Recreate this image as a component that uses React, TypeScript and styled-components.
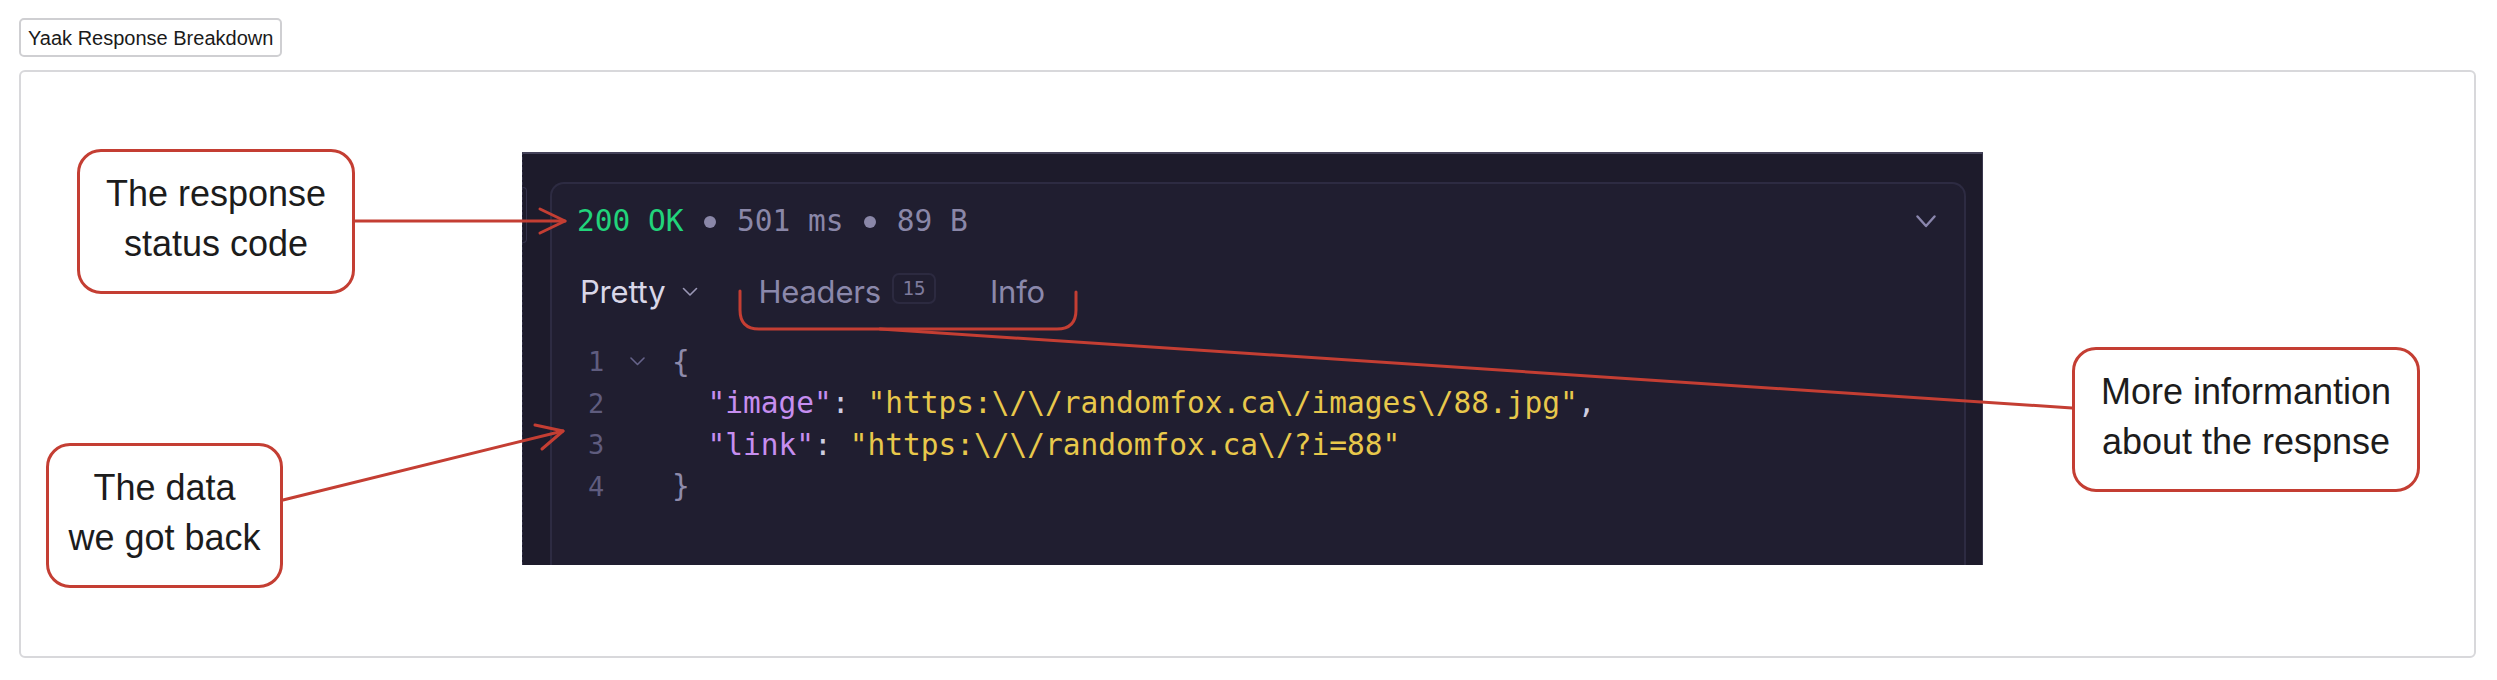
import React from "react";
import styled, { createGlobalStyle } from "styled-components";

const GlobalStyle = createGlobalStyle`
  html, body { margin: 0; padding: 0; background: #ffffff; }
  body { font-family: "Liberation Sans", Arial, sans-serif; }
  * { box-sizing: border-box; }
`;

const Page = styled.div`
  padding: 18px 21px 0 19px;
  display: flex;
  flex-direction: column;
  align-items: flex-start;
  gap: 13px;
`;

const TitleButton = styled.button`
  height: 39px;
  padding: 0 7px;
  border: 2px solid #cfcfd2;
  border-radius: 5px;
  background: #ffffff;
  color: #1a1a1a;
  font-family: "Liberation Sans", Arial, sans-serif;
  font-size: 20px;
  line-height: 1;
`;

const Frame = styled.div`
  position: relative;
  width: 100%;
  height: 588px;
  border: 2px solid #d8d8db;
  border-radius: 6px;
  display: flex;
  justify-content: center;
  align-items: flex-start;
  padding: 80px 0 91px 10px;
`;

const DarkPanel = styled.div`
  width: 1461px;
  height: 413px;
  display: flex;
  background: #1d1b2b;
  border-top: 2px solid #45435a;
  border-right: 1px solid #3a384e;
  border-left: 1px dashed #35334a;
  padding: 28px 16px 0 0;
  overflow: hidden;
`;

const SideGutter = styled.div`
  width: 27px;
  flex: none;
`;

const EdgeTab = styled.div`
  width: 4px;
  height: 56px;
  margin-top: 5px;
  border: 1px solid #34324a;
  border-left: none;
  border-radius: 0 6px 6px 0;
`;

const Card = styled.div`
  flex: 1;
  display: flex;
  flex-direction: column;
  background: #201e30;
  border: 2px solid #2d2b42;
  border-bottom: none;
  border-radius: 14px 14px 0 0;
  padding: 15px 28px 0 25px;
`;

const StatusRow = styled.div`
  height: 44px;
  display: flex;
  align-items: center;
  justify-content: space-between;
`;

const StatusText = styled.div`
  font-family: "DejaVu Sans Mono", "Liberation Mono", monospace;
  font-size: 29.5px;
  line-height: 44px;
  color: #8a87a8;
  white-space: pre;
`;

const Ok = styled.span`
  color: #22d47b;
`;

const Dot = styled.span`
  display: inline-block;
  width: 12px;
  height: 12px;
  margin: 0 2.9px;
  border-radius: 50%;
  background: #8a87a8;
  vertical-align: 3px;
`;

const TabsRow = styled.div`
  margin-top: 26px;
  margin-left: 3px;
  height: 44px;
  display: flex;
  align-items: center;
  font-family: Inter, "Noto Sans", sans-serif;
  font-size: 31px;
`;

const Tab = styled.span<{ $active?: boolean }>`
  color: ${(p) => (p.$active ? "#d9d7e8" : "#8b88ab")};
  letter-spacing: -0.2px;
`;

const PrettyChevron = styled.svg`
  margin-left: 17px;
  margin-right: 60px;
  margin-top: 2px;
`;

const Badge = styled.span`
  margin-left: 11px;
  margin-right: 54px;
  width: 44px;
  height: 31px;
  display: inline-flex;
  align-items: center;
  justify-content: center;
  border: 2px solid #2c2a40;
  border-radius: 7px;
  font-family: "DejaVu Sans Mono", monospace;
  font-size: 19px;
  color: #7d7a9c;
  margin-top: -6px;
`;

const Code = styled.div`
  margin-top: 28px;
  display: flex;
  flex-direction: column;
`;

const CodeLine = styled.div`
  height: 41.5px;
  display: flex;
  align-items: center;
  font-family: "DejaVu Sans Mono", "Liberation Mono", monospace;
  font-size: 29.5px;
  white-space: pre;
`;

const LineNo = styled.span`
  width: 42px;
  margin-left: 11px;
  font-size: 27px;
  color: #5f5c7e;
`;

const Fold = styled.span`
  width: 42px;
  display: flex;
  align-items: center;
`;

const Indent = styled.span`
  display: inline-block;
  width: 2ch;
`;

const Punct = styled.span`
  color: #cfcde0;
`;
const Brace = styled.span`
  color: #8e8bab;
`;
const Key = styled.span`
  color: #c68ef0;
`;
const Str = styled.span`
  color: #e8c84b;
`;

const Overlay = styled.svg`
  position: absolute;
  left: 0;
  top: 0;
  width: 100%;
  height: 100%;
  pointer-events: none;
  overflow: visible;
`;

const Callout = styled.div<{ $x: number; $y: number; $w: number }>`
  position: absolute;
  left: ${(p) => p.$x}px;
  top: ${(p) => p.$y}px;
  width: ${(p) => p.$w}px;
  height: 145px;
  border: 3px solid #c43e33;
  border-radius: 24px;
  background: #ffffff;
  padding-top: 17px;
  text-align: center;
  font-family: "Liberation Sans", Arial, sans-serif;
  font-size: 36px;
  line-height: 50px;
  color: #1c1c1c;
`;

const RED = "#c43e33";

export default function App() {
  return (
    <>
      <GlobalStyle />
      <Page>
        <TitleButton>Yaak Response Breakdown</TitleButton>
        <Frame>
          <DarkPanel>
            <SideGutter>
              <EdgeTab />
            </SideGutter>
            <Card>
              <StatusRow>
                <StatusText>
                  <Ok>200 OK</Ok>
                  {" "}
                  <Dot />
                  {" 501 ms "}
                  <Dot />
                  {" 89 B"}
                </StatusText>
                <svg width="20" height="13" viewBox="0 0 20 13">
                  <polyline
                    points="1.5,1.5 10,11 18.5,1.5"
                    fill="none"
                    stroke="#8a86ad"
                    strokeWidth="2.4"
                    strokeLinecap="round"
                    strokeLinejoin="round"
                  />
                </svg>
              </StatusRow>
              <TabsRow>
                <Tab $active>Pretty</Tab>
                <PrettyChevron width="16" height="10" viewBox="0 0 16 10">
                  <polyline
                    points="1.5,1.5 8,8 14.5,1.5"
                    fill="none"
                    stroke="#9a97b5"
                    strokeWidth="1.6"
                    strokeLinecap="round"
                    strokeLinejoin="round"
                  />
                </PrettyChevron>
                <Tab>Headers</Tab>
                <Badge>15</Badge>
                <Tab>Info</Tab>
              </TabsRow>
              <Code>
                <CodeLine>
                  <LineNo>1</LineNo>
                  <Fold>
                    <svg width="15" height="9" viewBox="0 0 15 9">
                      <polyline
                        points="1,1 7.5,7.5 14,1"
                        fill="none"
                        stroke="#66638a"
                        strokeWidth="1.6"
                        strokeLinecap="round"
                        strokeLinejoin="round"
                      />
                    </svg>
                  </Fold>
                  <Brace>{"{"}</Brace>
                </CodeLine>
                <CodeLine>
                  <LineNo>2</LineNo>
                  <Fold />
                  <Indent />
                  <Key>"image"</Key>
                  <Punct>: </Punct>
                  <Str>{'"https:\\/\\/randomfox.ca\\/images\\/88.jpg"'}</Str>
                  <Punct>,</Punct>
                </CodeLine>
                <CodeLine>
                  <LineNo>3</LineNo>
                  <Fold />
                  <Indent />
                  <Key>"link"</Key>
                  <Punct>: </Punct>
                  <Str>{'"https:\\/\\/randomfox.ca\\/?i=88"'}</Str>
                </CodeLine>
                <CodeLine>
                  <LineNo>4</LineNo>
                  <Fold />
                  <Brace>{"}"}</Brace>
                </CodeLine>
              </Code>
            </Card>
          </DarkPanel>

          <Overlay>
            <g fill="none" stroke={RED} strokeWidth="3" strokeLinecap="round" strokeLinejoin="round">
              <path d="M331,149 L544,149" />
              <path d="M519,137 L544,149 L519,161" />
              <path d="M262,428 L542,359" />
              <path d="M514,353 L542,359 L521,377" />
              <path d="M719,219 L719,238 Q719,257 738,257 L1036,257 Q1055,257 1055,238 L1055,220" />
              <path d="M859,257 L2051,336" />
            </g>
          </Overlay>

          <Callout $x={56} $y={77} $w={278}>
            The response
            <br />
            status code
          </Callout>
          <Callout $x={25} $y={371} $w={237}>
            The data
            <br />
            we got back
          </Callout>
          <Callout $x={2051} $y={275} $w={348}>
            More informantion
            <br />
            about the respnse
          </Callout>
        </Frame>
      </Page>
    </>
  );
}
